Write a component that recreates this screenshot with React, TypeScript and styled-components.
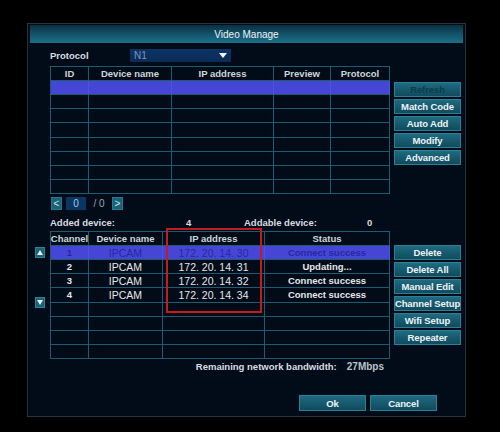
import styled, { createGlobalStyle } from "styled-components";

const GlobalStyle = createGlobalStyle`
  html, body {
    margin: 0;
    background: #000;
  }
  body {
    font-family: "Liberation Sans", Arial, sans-serif;
  }
`;

const Screen = styled.div`
  width: 500px;
  height: 432px;
  box-sizing: border-box;
  padding: 23px 0 0 27px;
  background: #000;
`;

const Dialog = styled.div`
  width: 439px;
  height: 394px;
  box-sizing: border-box;
  border: 1px solid #2c3338;
  background: #020c19;
  padding: 1px 2px;
`;

const TitleBar = styled.div`
  height: 18px;
  display: flex;
  align-items: center;
  justify-content: center;
  background: linear-gradient(to bottom, #0a2f40 0%, #13566c 55%, #1a6f88 100%);
  color: #eef4f6;
  font-size: 10px;
`;

const Body = styled.div`
  padding-left: 5px;
  display: flex;
  flex-direction: column;
`;

const Section = styled.div<{ $top: number }>`
  display: flex;
  margin-top: ${({ $top }) => $top}px;
`;

const Gutter = styled.div`
  width: 15px;
  flex: none;
  display: flex;
  flex-direction: column;
`;

const Main = styled.div`
  width: 340px;
  flex: none;
  position: relative;
`;

const Side = styled.div<{ $top: number }>`
  width: 67px;
  margin-left: 4px;
  padding-top: ${({ $top }) => $top}px;
  display: flex;
  flex-direction: column;
  gap: 2px;
`;

const Label = styled.span`
  color: #d7dee2;
  font-size: 9.5px;
  font-weight: bold;
  white-space: nowrap;
`;

const ProtocolRow = styled.div`
  height: 14px;
  display: flex;
  align-items: center;
`;

const ProtocolLabel = styled(Label)`
  width: 80px;
`;

const Select = styled.div`
  width: 101px;
  height: 13px;
  box-sizing: border-box;
  background: linear-gradient(to bottom, #0c3566, #0a2b55);
  display: flex;
  align-items: center;
  justify-content: space-between;
  padding: 0 4px 0 4px;
  color: #7f95b8;
  font-size: 10px;
`;

const Grid = styled.div<{ $cols: string }>`
  display: grid;
  grid-template-columns: ${({ $cols }) => $cols};
  grid-template-rows: repeat(9, 1fr);
  height: 128px;
  box-sizing: border-box;
  border-top: 1px solid #1d5b70;
  border-left: 1px solid #1d5b70;
`;

const Cell = styled.div<{ $hl?: boolean; $head?: boolean; $mono?: boolean }>`
  border-right: 1px solid ${({ $hl }) => ($hl ? "#5252da" : "#1d5b70")};
  border-bottom: 1px solid #1d5b70;
  background: ${({ $hl }) => ($hl ? "#4646d6" : "transparent")};
  color: ${({ $hl, $head }) => ($hl ? "#2727a2" : $head ? "#cdd6da" : "#e2e8eb")};
  display: flex;
  align-items: center;
  justify-content: center;
  font-size: ${({ $mono }) => ($mono ? "10.5px" : "9.5px")};
  font-weight: ${({ $mono }) => ($mono ? "normal" : "bold")};
  white-space: nowrap;
  overflow: hidden;
`;

const Pager = styled.div`
  height: 13px;
  margin-left: 1px;
  display: flex;
  align-items: center;
  gap: 4px;
`;

const PageBtn = styled.div`
  width: 11px;
  height: 13px;
  box-sizing: border-box;
  background: #1a6275;
  border: 1px solid #237a90;
  color: #cfe6ee;
  font-size: 10px;
  display: flex;
  align-items: center;
  justify-content: center;
`;

const PageInput = styled.div`
  width: 20px;
  height: 13px;
  background: #0b3563;
  color: #a9c7e8;
  font-size: 10px;
  display: flex;
  align-items: center;
  justify-content: center;
`;

const PageText = styled.span`
  width: 18px;
  color: #9aa6ad;
  font-size: 10px;
  text-align: center;
  white-space: pre;
`;

const CountRow = styled.div`
  height: 13px;
  display: grid;
  grid-template-columns: 136px 58px 123px auto;
  align-items: center;
`;

const Arrow = styled.div<{ $top: number }>`
  width: 10px;
  height: 11px;
  margin-top: ${({ $top }) => $top}px;
  box-sizing: border-box;
  background: #1a6275;
  border: 1px solid #2a8398;
  display: flex;
  align-items: center;
  justify-content: center;
`;

const RedFrame = styled.div`
  position: absolute;
  left: 116px;
  top: -3px;
  width: 96px;
  height: 85px;
  box-sizing: border-box;
  border: 2px solid #c41c1c;
  pointer-events: none;
`;

const Button = styled.div<{ $dim?: boolean }>`
  height: 15px;
  box-sizing: border-box;
  border: 1px solid #2a8095;
  background: linear-gradient(to bottom, #1f6b80 0%, #175a6e 50%, #114b5d 100%);
  color: ${({ $dim }) => ($dim ? "#0d3c4a" : "#eef4f6")};
  font-size: 9.5px;
  font-weight: bold;
  display: flex;
  align-items: center;
  justify-content: center;
  white-space: nowrap;
  letter-spacing: -0.1px;
`;

const Bandwidth = styled.div`
  height: 12px;
  margin-top: 1px;
  display: flex;
  align-items: center;
  justify-content: flex-end;
  gap: 10px;
  padding-right: 6px;
  width: 355px;
  box-sizing: border-box;
`;

const Speed = styled.span`
  color: #b9c3c8;
  font-size: 10px;
  font-weight: bold;
`;

const Footer = styled.div`
  margin-top: 23px;
  display: flex;
  justify-content: flex-end;
  gap: 4px;
  padding-right: 26px;
`;

const FooterButton = styled(Button)`
  width: 67px;
  height: 16px;
`;

const topCols = "38px 83px 102px 57px 59px";
const bottomCols = "38px 74px 102px 125px";

const devices = [
  { ch: "1", name: "IPCAM", ip: "172. 20. 14. 30", status: "Connect success" },
  { ch: "2", name: "IPCAM", ip: "172. 20. 14. 31", status: "Updating..." },
  { ch: "3", name: "IPCAM", ip: "172. 20. 14. 32", status: "Connect success" },
  { ch: "4", name: "IPCAM", ip: "172. 20. 14. 34", status: "Connect success" },
];

function Tri({ up }: { up?: boolean }) {
  return (
    <svg width="6" height="5" viewBox="0 0 6 5">
      <polygon points={up ? "0,5 3,0 6,5" : "0,0 6,0 3,5"} fill="#e8eef0" />
    </svg>
  );
}

export default function App() {
  const topHead = ["ID", "Device name", "IP address", "Preview", "Protocol"];
  const bottomHead = ["Channel", "Device name", "IP address", "Status"];

  return (
    <Screen>
      <GlobalStyle />
      <Dialog>
        <TitleBar>Video Manage</TitleBar>
        <Body>
          <Section $top={5}>
            <Gutter />
            <Main>
              <ProtocolRow>
                <ProtocolLabel>Protocol</ProtocolLabel>
                <Select>
                  N1
                  <svg width="8" height="5" viewBox="0 0 8 5">
                    <polygon points="0,0 8,0 4,5" fill="#f2f6fa" />
                  </svg>
                </Select>
              </ProtocolRow>
            </Main>
          </Section>

          <Section $top={4}>
            <Gutter />
            <Main>
              <Grid $cols={topCols}>
                {topHead.map((h) => (
                  <Cell $head key={h}>
                    {h}
                  </Cell>
                ))}
                {Array.from({ length: 8 }).map((_, r) =>
                  topHead.map((h) => <Cell $hl={r === 0} key={`${r}-${h}`} />)
                )}
              </Grid>
            </Main>
            <Side $top={16}>
              <Button $dim>Refresh</Button>
              <Button>Match Code</Button>
              <Button>Auto Add</Button>
              <Button>Modify</Button>
              <Button>Advanced</Button>
            </Side>
          </Section>

          <Section $top={3}>
            <Gutter />
            <Main>
              <Pager>
                <PageBtn>&lt;</PageBtn>
                <PageInput>0</PageInput>
                <PageText>/ 0</PageText>
                <PageBtn>&gt;</PageBtn>
              </Pager>
            </Main>
          </Section>

          <Section $top={6}>
            <Gutter />
            <Main>
              <CountRow>
                <Label>Added device:</Label>
                <Label>4</Label>
                <Label>Addable device:</Label>
                <Label>0</Label>
              </CountRow>
            </Main>
          </Section>

          <Section $top={2}>
            <Gutter>
              <Arrow $top={16}>
                <Tri up />
              </Arrow>
              <Arrow $top={39}>
                <Tri />
              </Arrow>
            </Gutter>
            <Main>
              <Grid $cols={bottomCols}>
                {bottomHead.map((h) => (
                  <Cell $head key={h}>
                    {h}
                  </Cell>
                ))}
                {Array.from({ length: 8 }).map((_, r) => {
                  const d = devices[r];
                  const hl = r === 0;
                  return [
                    <Cell $hl={hl} key={`${r}-c`}>{d?.ch}</Cell>,
                    <Cell $hl={hl} $mono key={`${r}-n`}>{d?.name}</Cell>,
                    <Cell $hl={hl} $mono key={`${r}-i`}>{d?.ip}</Cell>,
                    <Cell $hl={hl} key={`${r}-s`}>{d?.status}</Cell>,
                  ];
                })}
              </Grid>
              <RedFrame />
            </Main>
            <Side $top={14}>
              <Button>Delete</Button>
              <Button>Delete All</Button>
              <Button>Manual Edit</Button>
              <Button>Channel Setup</Button>
              <Button>Wifi Setup</Button>
              <Button>Repeater</Button>
            </Side>
          </Section>

          <Section $top={0}>
            <Bandwidth>
              <Label>Remaining network bandwidth:</Label>
              <Speed>27Mbps</Speed>
            </Bandwidth>
          </Section>

          <Footer>
            <FooterButton>Ok</FooterButton>
            <FooterButton>Cancel</FooterButton>
          </Footer>
        </Body>
      </Dialog>
    </Screen>
  );
}
